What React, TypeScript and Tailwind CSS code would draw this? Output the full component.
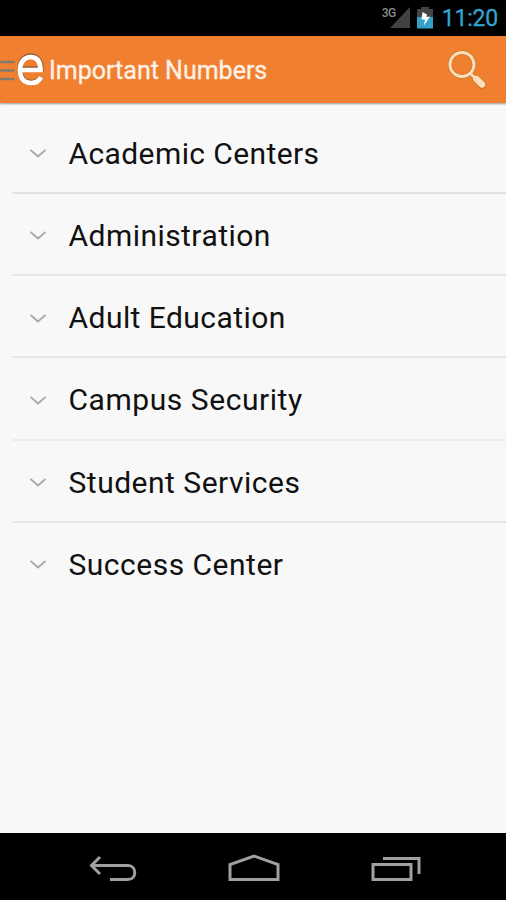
import React from 'react';

const categories = [
  { name: 'Academic Centers', spacing: 'tracking-[0.4px]', divider: 'border-[#e2e2e2]' },
  { name: 'Administration', spacing: 'tracking-[0.45px]', divider: 'border-[#e6e6e6]' },
  { name: 'Adult Education', spacing: 'tracking-[0.45px]', divider: 'border-[#e6e6e6]' },
  { name: 'Campus Security', spacing: 'tracking-[0.55px]', divider: 'border-[#ededed]' },
  { name: 'Student Services', spacing: 'tracking-[0.5px]', divider: 'border-[#e6e6e6]' },
  { name: 'Success Center', spacing: 'tracking-[0.5px]', divider: 'border-transparent' },
];

function StatusBar() {
  return (
    <div className="flex h-9 shrink-0 items-start justify-end bg-black pr-2">
      <span className="mt-[7px] text-[12px] leading-[12px] font-medium tracking-[-0.5px] text-[#8c8c8c]">3G</span>
      <svg className="-ml-[6px] mt-[7px] h-[22px] w-[20px]" viewBox="0 0 20 22">
        <path d="M20 0V21H0Z" fill="#424242" />
      </svg>
      <svg className="ml-[7px] mt-[7px] h-[22px] w-4" viewBox="0 0 16 22">
        <path d="M4 0h8v2H16v9H0V2h4Z" fill="#444444" />
        <path d="M0 10h16v11.500H0Z" fill="#33a0c8" />
        <path d="M5.500 5L10 7.500L9.500 10L13 9.500L7 18.500L8 12.500L4.500 12.500Z" fill="#ffffff" />
      </svg>
      <span className="ml-[9px] mt-[5px] text-[23px] leading-[27px] tracking-[-0.2px] text-[#33a5d0] [-webkit-text-stroke:0.3px_#33a5d0]">11:20</span>
    </div>
  );
}

function ActionBar() {
  return (
    <header className="flex h-[67px] shrink-0 items-center bg-[#f08030] shadow-[0_1px_2px_rgba(0,0,0,0.4)]">
      <svg className="h-[67px] w-[49px]" viewBox="0 0 49 67">
        <path d="M0 26h14.500M0 34.500h14.500M0 43h14.500" stroke="#85796b" strokeWidth="2.700" />
        <path d="M21 33H41C41 25 37 20 30.500 20C24 20 20 25.500 20 33C20 41 24 46.500 31 46.500C36 46.500 39.500 44 41 40.500" fill="none" stroke="#9b5d30" strokeWidth="5.500" />
        <path d="M21 34H40.500C40.500 25.500 37 21 30.500 21C24 21 20 26.500 20 34C20 42 24 47 31 47C36 47 39.500 44.500 41 41" fill="none" stroke="#ffffff" strokeWidth="4.700" />
      </svg>
      <h1 className="mt-[3px] flex-1 whitespace-nowrap text-[25px] leading-[30px] text-[#fff1e6] [-webkit-text-stroke:0.3px_#fff1e6]">Important Numbers</h1>
      <svg className="mr-[18px] h-[40px] w-[40px]" viewBox="0 0 40 40">
        <g fill="none" stroke="#c87818" strokeLinecap="round">
          <circle cx="14" cy="14.500" r="12" strokeWidth="4.500" />
          <path d="M23 24L27 28" strokeWidth="4.500" />
          <path d="M28.500 29L34.500 35" strokeWidth="8" />
        </g>
        <g fill="none" stroke="#fddcc0" strokeLinecap="round">
          <circle cx="14" cy="14.500" r="12" strokeWidth="3" />
          <path d="M23 24L27 28" strokeWidth="3" />
          <path d="M28.500 29L34 34.500" strokeWidth="6.500" />
        </g>
      </svg>
    </header>
  );
}

function NavigationBar() {
  return (
    <nav className="flex h-[67px] shrink-0 items-center justify-between bg-black pl-[88px] pr-[84px]">
      <svg className="h-[32px] w-[50px]" viewBox="0 0 50 32" fill="none" stroke="#a0a0a0" strokeWidth="3">
        <path d="M12 6L3.500 14.500L12 23M3 14.500H40C49 14.500 49 28.500 40 28.500H22" />
      </svg>
      <svg className="h-[32px] w-[54px]" viewBox="0 0 54 32" fill="none" stroke="#a0a0a0" strokeWidth="3">
        <path d="M3 28.500V13.500L27 5L51 13.500V28.500Z" />
      </svg>
      <svg className="h-[32px] w-[52px]" viewBox="0 0 52 32" fill="none" stroke="#a0a0a0" strokeWidth="3">
        <path d="M3 13.500H41V28.500H3ZM13 7.500H49V23" />
      </svg>
    </nav>
  );
}

export default function App() {
  return (
    <div className="flex h-[900px] w-[506px] flex-col overflow-hidden bg-[#f8f8f8] font-['Roboto',sans-serif]">
      <StatusBar />
      <ActionBar />
      <main className="flex-1 pl-3 pt-[8.5px]">
        {categories.map(({ name, spacing, divider }) => (
          <div key={name} className={`flex h-[82.250px] items-center border-b-2 pl-[18px] ${divider}`}>
            <svg className="mt-[3px] h-4 w-4" viewBox="0 0 16 16" fill="none" stroke="#a8a8a8" strokeWidth="1.800">
              <path d="M0.500 5L8 11.500L15.500 5" />
            </svg>
            <span className={`ml-[22.5px] mt-1 whitespace-nowrap text-[30px] leading-9 text-[#111111] ${spacing}`}>{name}</span>
          </div>
        ))}
      </main>
      <NavigationBar />
    </div>
  );
}
